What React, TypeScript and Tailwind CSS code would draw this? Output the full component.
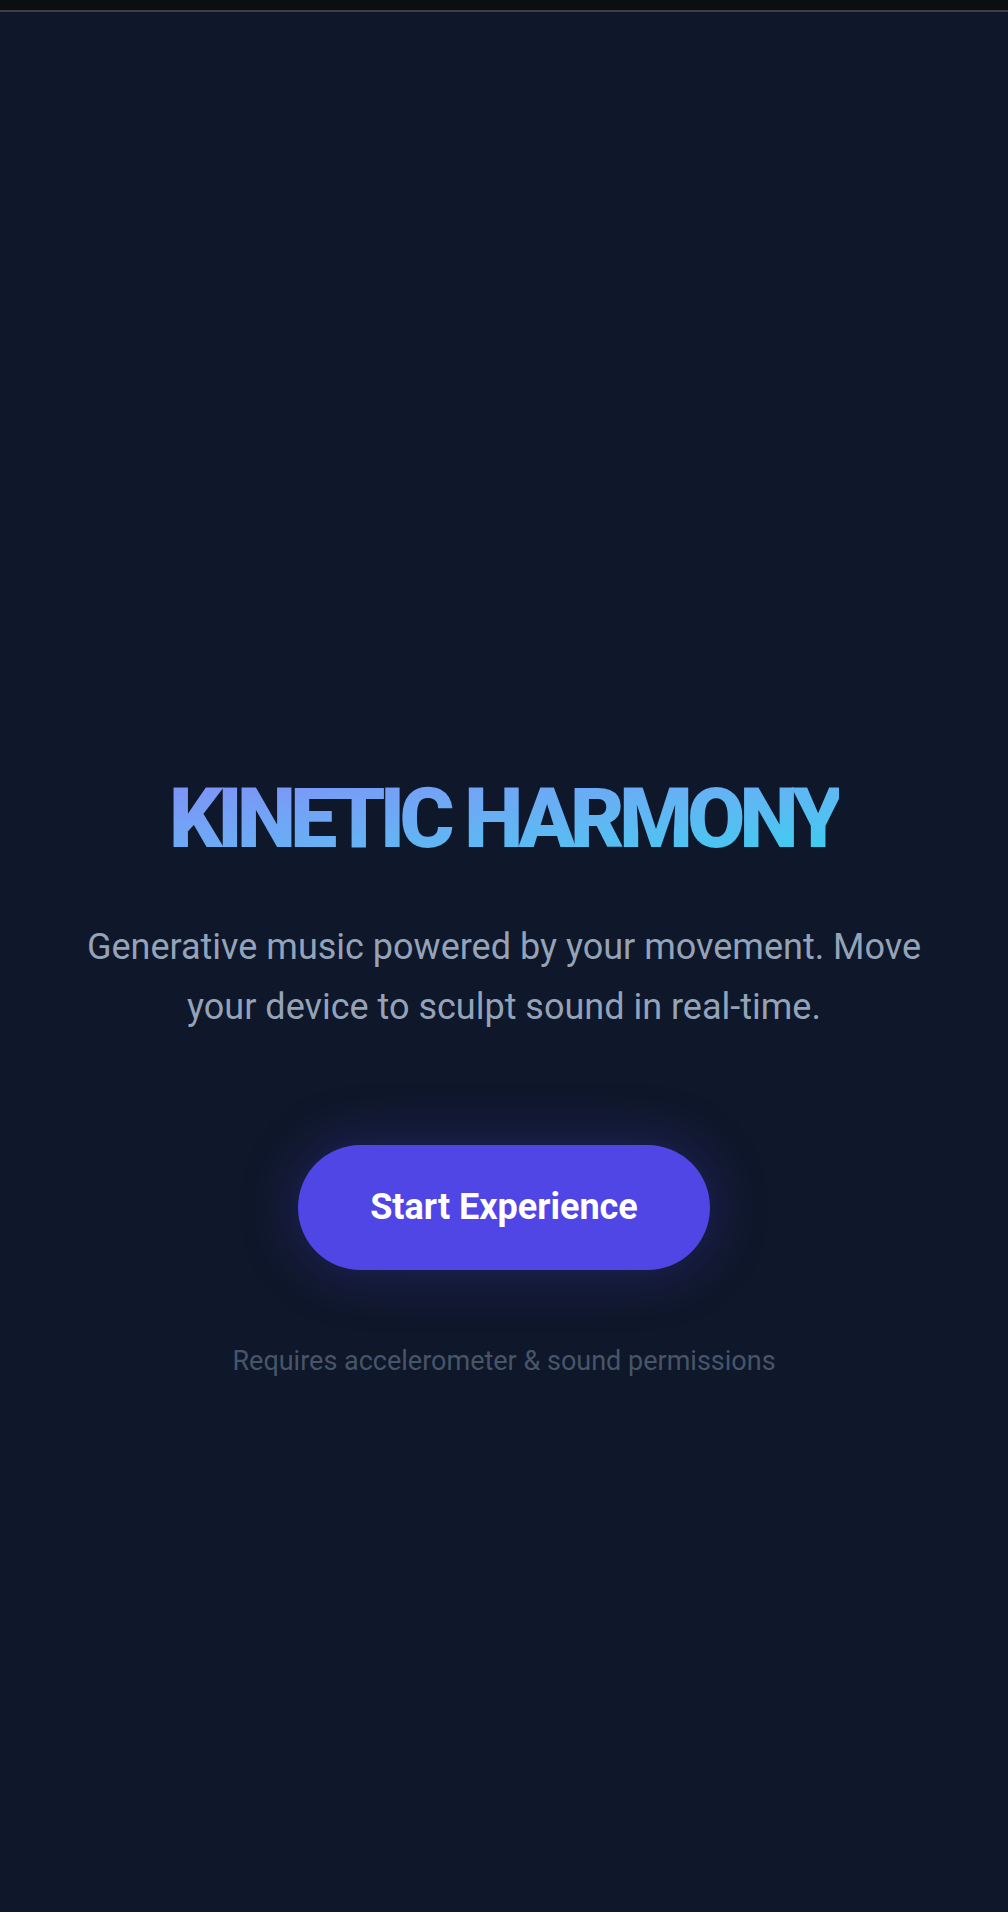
import { useState } from 'react'

export default function App() {
    const [started, setStarted] = useState(false)

    return (
        <div className="min-h-[1912px] bg-[#0f172a] font-['Roboto',_'Liberation_Sans',_sans-serif] flex flex-col">
            {/* top strip */}
            <div className="h-[10px] bg-[#0b0f12]" />
            <div className="h-[2px] bg-[#3d4044]" />

            <main className="flex-1 flex flex-col items-center px-[42px] pt-[757px] text-center">
                <h1 className="inline-block text-[84px] leading-[100px] font-black tracking-[-0.067em] bg-linear-to-br from-[#818cf8] to-[#22d3ee] bg-clip-text text-transparent">
                    KINETIC HARMONY
                </h1>

                <p className="mt-[48px] max-w-[870px] text-[36px] leading-[60px] text-[#94a3b8]">
                    Generative music powered by your movement. Move your device to sculpt sound in real-time.
                </p>

                <button
                    onClick={() => setStarted(!started)}
                    className="mt-[108px] px-[72px] py-[38px] rounded-full bg-[#4f46e5] hover:bg-[#4338ca] text-white text-[36px] leading-[49px] font-bold shadow-[0_0_60px_rgba(79,70,229,0.3)] transition"
                >
                    Start Experience
                </button>

                <p className="mt-[73px] text-[27px] leading-[36px] text-[#475569]">
                    Requires accelerometer &amp; sound permissions
                </p>
            </main>
        </div>
    )
}
